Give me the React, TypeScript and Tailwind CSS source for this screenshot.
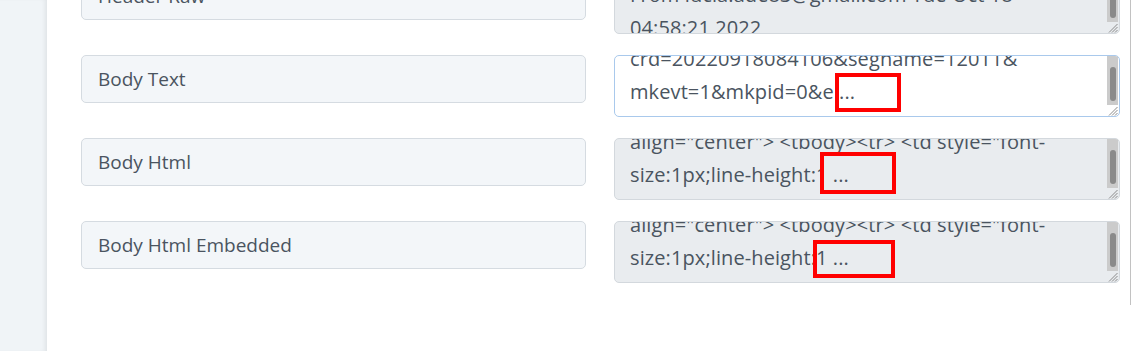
import React from 'react'

type Field = {
  label: string
  lines: string[]
  active?: boolean
  shift?: number
  mark?: { left: number; top: number; w: number; h: number }
}

const fields: Field[] = [
  {
    label: 'Header Raw',
    lines: ['Received: from mail.gmail.com', 'From lucia.ade83@gmail.com  Tue Oct 18', '04:58:21 2022'],
    shift: -19,
  },
  {
    label: 'Body Text',
    lines: ['https://www.example.com/?mkcid=1&mkrid=711-', 'crd=20220918084106&segname=12011&', 'mkevt=1&mkpid=0&e ...'],
    active: true,
    mark: { left: 220, top: 17, w: 66, h: 39 },
  },
  {
    label: 'Body Html',
    lines: ['<table width="100%" border="0"', 'align="center"> <tbody><tr> <td style="font-', 'size:1px;line-height:1 ...'],
    mark: { left: 205, top: 13, w: 76, h: 42 },
  },
  {
    label: 'Body Html Embedded',
    lines: ['<table width="100%" border="0"', 'align="center"> <tbody><tr> <td style="font-', 'size:1px;line-height:1 ...'],
    mark: { left: 198, top: 18, w: 82, h: 38 },
  },
]

function Grip() {
  return (
    <svg width="11" height="11" viewBox="0 0 11 11" className="block">
      <g stroke="#8a8a8a" strokeWidth="1">
        <line x1="2" y1="10.5" x2="10.5" y2="2" />
        <line x1="5" y1="10.5" x2="10.5" y2="5" />
        <line x1="8" y1="10.5" x2="10.5" y2="8" />
      </g>
    </svg>
  )
}

function TextBox({ f }: { f: Field }) {
  return (
    <div
      className={
        'relative flex h-[62px] overflow-hidden rounded-[5px] border ' +
        (f.active ? 'border-[#a9c9ec] bg-white' : 'border-[#d3d8dd] bg-[#e9ecef]')
      }
    >
      <div className="flex min-w-0 flex-1 flex-col justify-end overflow-hidden pl-[15px] pb-[8px]">
        <div style={f.shift ? { marginBottom: f.shift } : undefined}>
          {f.lines.map((l, i) => (
            <div key={i} className="whitespace-nowrap text-[20px] leading-[33px] tracking-[0.1px]">
              {l}
            </div>
          ))}
        </div>
      </div>
      <div className="mr-px flex w-[11px] shrink-0 flex-col">
        <div className="flex flex-1 flex-col bg-[#cbcbcb]">
          <div className="mx-auto mb-[4px] mt-auto h-[34px] w-[6px] rounded-full bg-[#8a8a8a]" />
        </div>
        <Grip />
      </div>
      {f.mark && (
        <div
          className="absolute border-[4px] border-[#ff0000]"
          style={{ left: f.mark.left, top: f.mark.top, width: f.mark.w, height: f.mark.h }}
        />
      )}
    </div>
  )
}

export default function App() {
  return (
    <div
      className="flex h-[351px] w-[1132px] overflow-hidden bg-white text-[#4a5460]"
      style={{ fontFamily: '"Open Sans", Lato, sans-serif' }}
    >
      <aside className="w-[47px] shrink-0 bg-[#f0f4f7] shadow-[inset_-4px_0_4px_-2px_rgba(0,0,0,0.07)]" />
      <main className="min-w-0 flex-1">
        <div className="-mt-[28px] ml-[34px] flex flex-col gap-[21px]">
          {fields.map(f => (
            <div key={f.label} className="grid grid-cols-[505px_506px] items-start gap-x-[28px]">
              <div className="flex h-[48px] items-center rounded-[5px] border border-[#d5dbe1] bg-[#f3f6f9] pl-[16px] text-[19px]">
                {f.label}
              </div>
              <TextBox f={f} />
            </div>
          ))}
        </div>
      </main>
      <div className="w-[2px] shrink-0">
        <div className="h-[305px] w-px bg-[#c2c2c2]" />
      </div>
    </div>
  )
}
